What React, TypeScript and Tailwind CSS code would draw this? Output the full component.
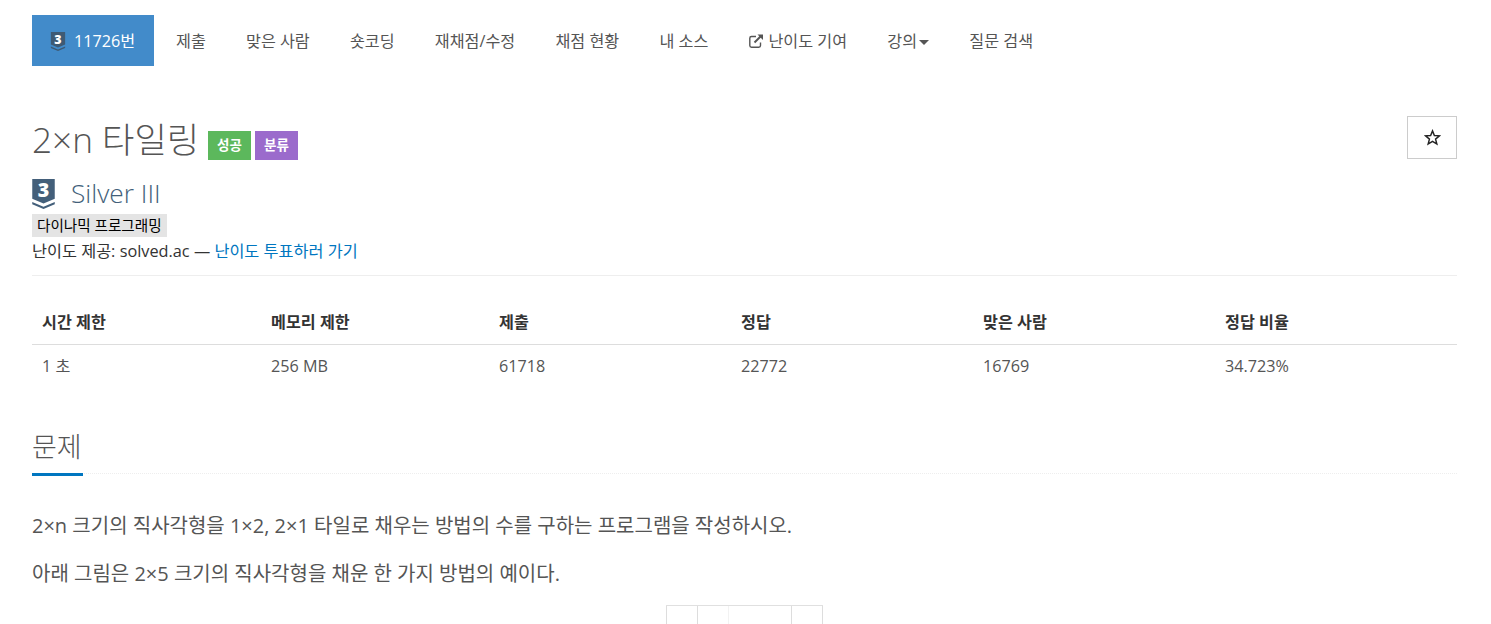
import React from "react";

const FONT = "[font-family:'Open_Sans','Noto_Sans_CJK_KR',sans-serif]";

const navItems = ["제출", "맞은 사람", "숏코딩", "재채점/수정", "채점 현황", "내 소스"];

const stats = [
  { label: "시간 제한", value: "1 초", width: "w-[229px]" },
  { label: "메모리 제한", value: "256 MB", width: "w-[228px]" },
  { label: "제출", value: "61718", width: "w-[242px]" },
  { label: "정답", value: "22772", width: "w-[242px]" },
  { label: "맞은 사람", value: "16769", width: "w-[242px]" },
  { label: "정답 비율", value: "34.723%", width: "w-[242px]" },
];

const TierBadge = ({ className, fill, ink }: { className: string; fill: string; ink: string }) => (
  <svg viewBox="0 0 24 32" className={`${className} overflow-visible`}>
    <path d="M0 0H24V21L12 26L0 21Z" fill={fill} />
    <path d="M0 24.5L12 29.5L24 24.5V27L12 32L0 27Z" fill={fill} />
    <text
      x="12"
      y="19.5"
      textAnchor="middle"
      fontSize="21"
      fontWeight="800"
      fontFamily="'Open Sans', sans-serif"
      fill={ink}
    >
      3
    </text>
  </svg>
);

const ExternalIcon = () => (
  <svg viewBox="0 0 16 16" className="mr-[4px] h-[16px] w-[16px]" fill="none" stroke="#555" strokeWidth="1.4">
    <path d="M8 3.5H3.5C2.5 3.5 1.8 4.2 1.8 5.2V12.5C1.8 13.5 2.5 14.2 3.5 14.2H10.8C11.8 14.2 12.5 13.5 12.5 12.5V9.5" />
    <path d="M6.5 9.5L13 3" strokeWidth="1.9" />
    <path d="M9.5 1.5H15V7Z" fill="#555" stroke="none" />
  </svg>
);

export default function App() {
  return (
    <div className={`${FONT} h-[624px] overflow-hidden bg-white pl-[32px] pr-[34px] pt-[15px] text-[16.2px] text-[#555]`}>
      <nav className="flex h-[51px] items-center">
        <a className="flex h-full w-[122px] items-center bg-[#428bca] pl-[18px] pt-[1px] text-[#fff]">
          <TierBadge className="mr-[8px] h-[19px] w-[16px]" fill="#3e5a74" ink="#fff" />
          11726번
        </a>
        <div className="ml-[22px] flex items-center gap-[40.2px] pt-[2px]">
          {navItems.map((item) => (
            <a key={item}>{item}</a>
          ))}
          <a className="flex items-center">
            <ExternalIcon />
            난이도 기여
          </a>
          <a className="flex items-center">
            강의
            <span className="ml-[2px] mt-[2px] border-x-[5px] border-t-[5px] border-x-transparent border-t-[#555]" />
          </a>
          <a>질문 검색</a>
        </div>
      </nav>

      <div className="mt-[50px] flex items-start justify-between">
        <div className="flex items-end">
          <h1 className="w-[166px] text-[35.2px] leading-[46px] font-[300] whitespace-nowrap text-[#555]">2×n 타일링</h1>
          <span className="mb-[2px] ml-[10px] flex h-[29px] w-[43px] items-center justify-center bg-[#5cb85c] text-[13.5px] font-semibold text-white">
            성공
          </span>
          <span className="mb-[2px] ml-[4px] flex h-[29px] w-[43px] items-center justify-center bg-[#9b6bcc] text-[13.5px] font-semibold text-white">
            분류
          </span>
        </div>
        <button className="flex h-[43px] w-[50px] items-center justify-center border border-[#ccc] text-[#333]">
          <svg viewBox="0 0 20 20" className="h-[17px] w-[17px]" fill="none" stroke="#222" strokeWidth="1.7">
            <path d="M10 2.2L12.2 7.7L18.2 8.1L13.6 11.9L15.1 17.7L10 14.5L4.9 17.7L6.4 11.9L1.8 8.1L7.8 7.7Z" />
          </svg>
        </button>
      </div>

      <div className="mt-[17px] flex h-[30px] items-center">
        <TierBadge className="h-[30px] w-[23px]" fill="#435f7a" ink="#fff" />
        <span className="mb-[2px] ml-[16px] text-[26.3px] leading-[30px] font-[300] text-[#435f7a]">Silver III</span>
      </div>
      <div className="mt-[4px]">
        <span className="inline-block h-[23px] bg-[#e4e4e4] px-[5px] text-[14.6px] leading-[23px] text-black">
          다이나믹 프로그래밍
        </span>
      </div>
      <p className="mt-[2px] h-[24px] text-[16.3px] leading-[24px] text-[#333]">
        난이도 제공: solved.ac — <a className="text-[#0076c0]">난이도 투표하러 가기</a>
      </p>

      <hr className="mt-[12px] border-[#eee]" />

      <table className="mt-[23px] w-full table-fixed text-left">
        <thead>
          <tr className="border-b border-[#ddd]">
            {stats.map((stat) => (
              <th key={stat.label} className={`${stat.width} h-[45px] px-[10px] pt-[2px] font-bold text-[#333]`}>
                {stat.label}
              </th>
            ))}
          </tr>
        </thead>
        <tbody>
          <tr>
            {stats.map((stat) => (
              <td key={stat.label} className="h-[43px] px-[10px]">
                {stat.value}
              </td>
            ))}
          </tr>
        </tbody>
      </table>

      <section className="mt-[39px]">
        <div className="relative h-[48px] border-b border-dotted border-[#eee]">
          <h2 className="text-[27px] leading-[42px] font-[300] text-[#555]">문제</h2>
          <span className="absolute bottom-[-3px] left-0 h-[3px] w-[51px] bg-[#0076c0]" />
        </div>
        <p className="mt-[39px] text-[20px] leading-[25px] text-[#555]">
          2×n 크기의 직사각형을 1×2, 2×1 타일로 채우는 방법의 수를 구하는 프로그램을 작성하시오.
        </p>
        <p className="mt-[23px] text-[20px] leading-[25px] text-[#555]">
          아래 그림은 2×5 크기의 직사각형을 채운 한 가지 방법의 예이다.
        </p>
        <div className="mt-[19px] ml-[634px] flex h-[40px] w-[157px] border-t border-[#e0e0e0]">
          <div className="w-[31px] border-l border-[#ddd]" />
          <div className="w-[31px] border-l border-[#ddd]" />
          <div className="w-[63px] border-l border-[#f2f2f2]" />
          <div className="w-[32px] border-x border-[#ddd]" />
        </div>
      </section>
    </div>
  );
}
